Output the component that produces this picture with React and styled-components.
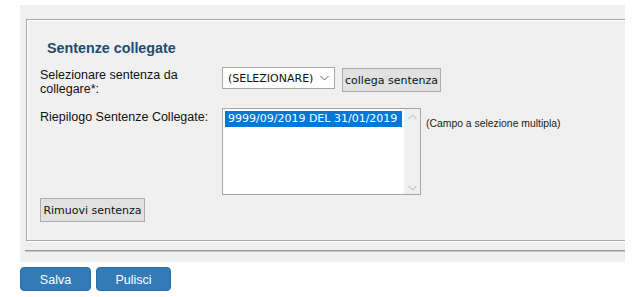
import React from "react";
import styled, { createGlobalStyle } from "styled-components";

const GlobalStyle = createGlobalStyle`
  body {
    margin: 0;
    background: #fff;
    font-family: "Liberation Sans", Arial, sans-serif;
  }
`;

const Page = styled.div`
  padding: 5px 7px 0 20px;
`;

const Panel = styled.div`
  background: #f0f0f0;
  height: 257px;
  overflow: hidden;
  padding-top: 14px;
  box-sizing: border-box;
`;

const Group = styled.div`
  margin-left: 6px;
  width: calc(100% + 20px);
  height: 222px;
  box-sizing: border-box;
  border: 1px solid #a8a8a8;
  box-shadow: inset 1px 1px 0 #fff, 1px 1px 0 #fff;
  padding: 20px 0 0 13px;
`;

const Title = styled.h3`
  margin: 0 0 11px 7px;
  font-size: 14.3px;
  line-height: 16px;
  font-weight: bold;
  color: #1f4b70;
`;

const Row = styled.div`
  display: grid;
  grid-template-columns: 182px auto;
  align-items: start;
  margin-bottom: ${({ gap }) => gap || 0}px;
`;

const Label = styled.div`
  font-size: 12.5px;
  line-height: 14px;
  color: #111;
  padding-top: ${({ top }) => top}px;
`;

const Controls = styled.div`
  display: flex;
  align-items: flex-start;
`;

const Select = styled.div`
  width: 113px;
  height: 22px;
  box-sizing: border-box;
  background: #fff;
  border: 1px solid #a6a6a6;
  display: flex;
  align-items: center;
  justify-content: space-between;
  padding: 0 5px 0 5px;
  font-family: "DejaVu Sans", Tahoma, sans-serif;
  font-size: 11px;
  color: #111;
`;

const GrayButton = styled.button`
  height: 24px;
  width: ${({ w }) => w}px;
  box-sizing: border-box;
  margin: ${({ m }) => m || "0"};
  padding: 0;
  background: #e1e1e1;
  border: 1px solid #adadad;
  border-radius: 0;
  font-family: "DejaVu Sans", Tahoma, sans-serif;
  font-size: 11px;
  color: #111;
`;

const ListBox = styled.div`
  width: 199px;
  height: 87px;
  box-sizing: border-box;
  background: #fff;
  border: 1px solid #a6a6a6;
  display: flex;
`;

const Options = styled.div`
  flex: 1;
  padding: 2px 2px 0 2px;
`;

const Option = styled.div`
  height: 16px;
  line-height: 16px;
  padding-left: 3px;
  background: ${({ selected }) => (selected ? "#0078d7" : "transparent")};
  color: ${({ selected }) => (selected ? "#fff" : "#111")};
  font-family: "DejaVu Sans", Tahoma, sans-serif;
  font-size: 11px;
`;

const Scrollbar = styled.div`
  width: 16px;
  background: #f0f0f0;
  display: flex;
  flex-direction: column;
  justify-content: space-between;
  align-items: center;
  padding: 5px 0 3px;
`;

const Hint = styled.span`
  margin: 10px 0 0 5px;
  font-size: 10.4px;
  color: #222;
`;

const Rule = styled.div`
  margin: 9px 0 0 5px;
  height: 0;
  border-top: 1px solid #9a9a9a;
  border-bottom: 1px solid #c8c8c8;
`;

const Actions = styled.div`
  display: flex;
  gap: 5px;
  margin-top: 5px;
`;

const BlueButton = styled.button`
  width: ${({ w }) => w}px;
  height: 24px;
  box-sizing: border-box;
  background: #337ab7;
  border: 1px solid #2e6da4;
  border-radius: 4px;
  color: #fff;
  font-family: "Liberation Sans", Arial, sans-serif;
  font-size: 12.5px;
  padding: 1px 0 0;
`;

const Chevron = ({ up, color }) => (
  <svg width="9" height="6" viewBox="0 0 9 6">
    <path
      d={up ? "M0.5 5 L4.5 1 L8.5 5" : "M0.5 1 L4.5 5 L8.5 1"}
      fill="none"
      stroke={color}
      strokeWidth="1"
    />
  </svg>
);

export default function App() {
  return (
    <>
      <GlobalStyle />
      <Page>
        <Panel>
          <Group>
            <Title>Sentenze collegate</Title>
            <Row gap={12}>
              <Label top={1}>
                Selezionare sentenza da
                <br />
                collegare*:
              </Label>
              <Controls>
                <Select>
                  (SELEZIONARE)
                  <Chevron color="#666" />
                </Select>
                <GrayButton w={99} m="1px 0 0 7px">
                  collega sentenza
                </GrayButton>
              </Controls>
            </Row>
            <Row gap={3}>
              <Label top={2}>Riepilogo Sentenze Collegate:</Label>
              <Controls>
                <ListBox>
                  <Options>
                    <Option selected>9999/09/2019 DEL 31/01/2019</Option>
                  </Options>
                  <Scrollbar>
                    <Chevron up color="#b0b0b0" />
                    <Chevron color="#b0b0b0" />
                  </Scrollbar>
                </ListBox>
                <Hint>(Campo a selezione multipla)</Hint>
              </Controls>
            </Row>
            <GrayButton w={105}>Rimuovi sentenza</GrayButton>
          </Group>
          <Rule />
        </Panel>
        <Actions>
          <BlueButton w={71}>Salva</BlueButton>
          <BlueButton w={75}>Pulisci</BlueButton>
        </Actions>
      </Page>
    </>
  );
}
